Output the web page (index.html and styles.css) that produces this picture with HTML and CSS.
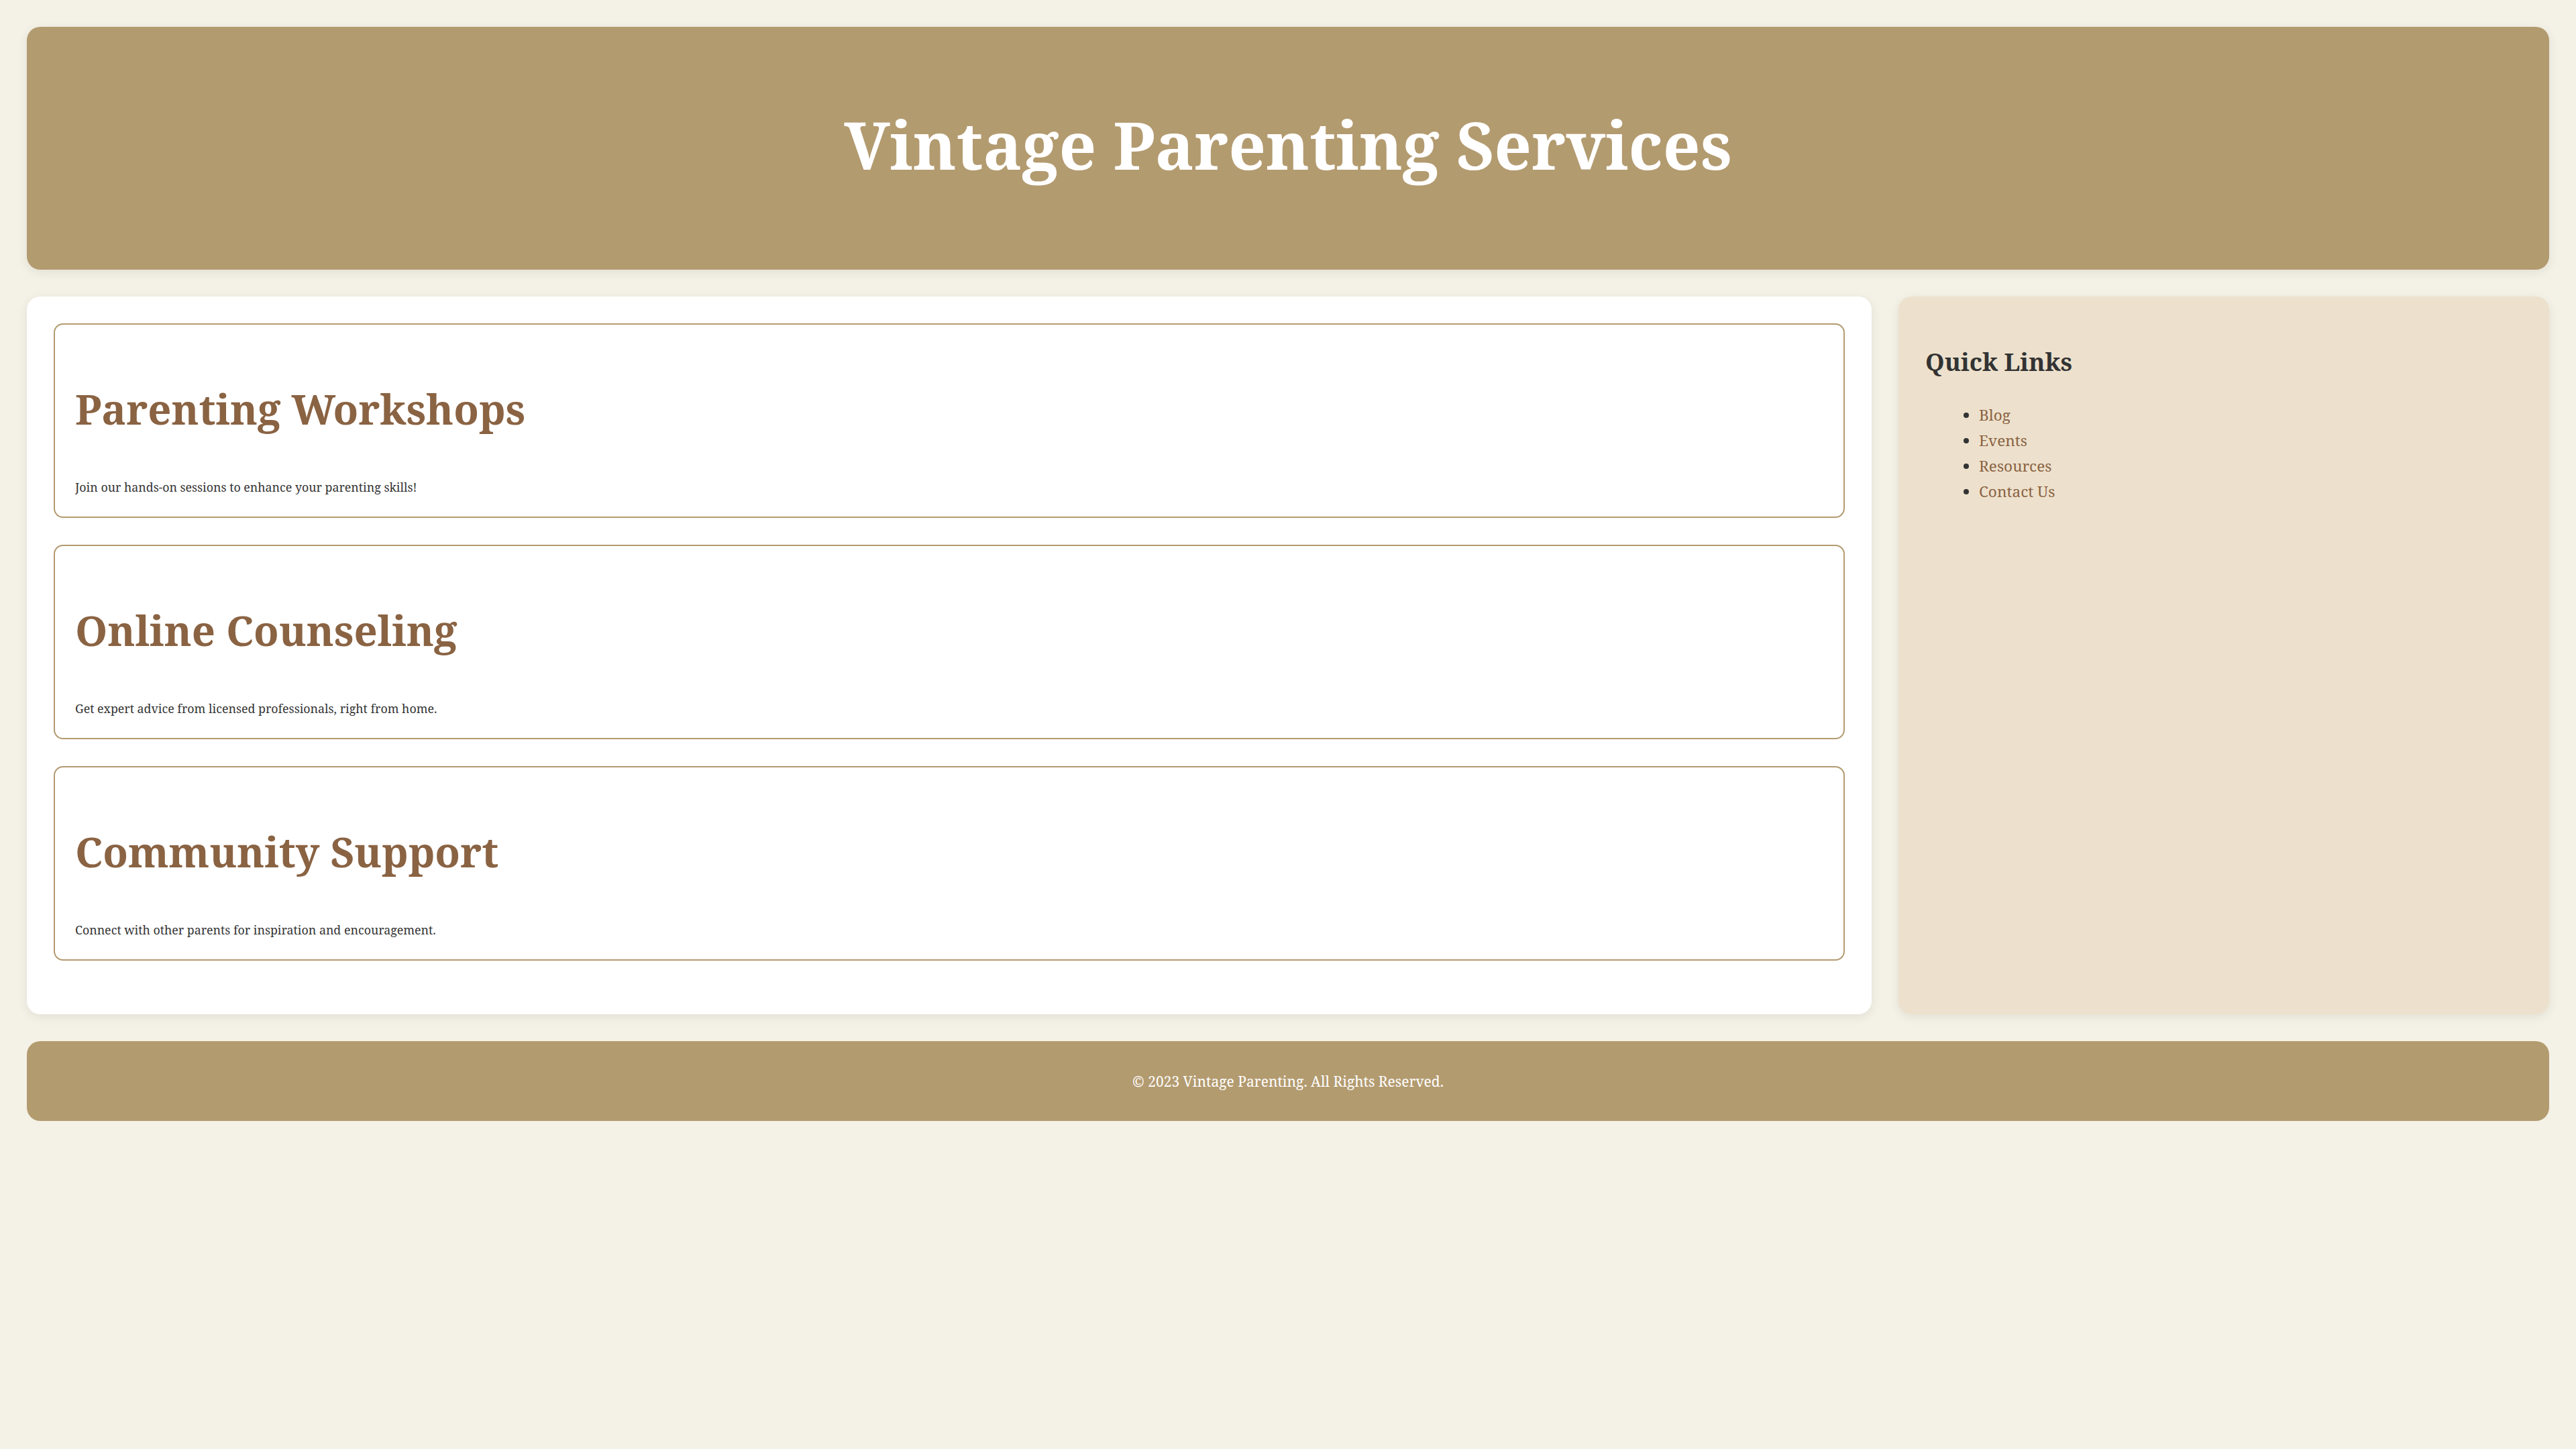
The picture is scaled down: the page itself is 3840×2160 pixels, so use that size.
FILE: index.html
```html
<!DOCTYPE html>
<html lang="en">
<head>
<meta charset="utf-8">
<title>Vintage Parenting Services</title>
<link rel="stylesheet" href="styles.css">
</head>
<body>
  <header class="site-header">
    <h1 class="site-title">Vintage Parenting Services</h1>
  </header>
  <div class="layout">
    <main class="content">
      <section class="service">
        <h2 class="service-title">Parenting Workshops</h2>
        <p class="service-text">Join our hands-on sessions to enhance your parenting skills!</p>
      </section>
      <section class="service">
        <h2 class="service-title">Online Counseling</h2>
        <p class="service-text">Get expert advice from licensed professionals, right from home.</p>
      </section>
      <section class="service">
        <h2 class="service-title">Community Support</h2>
        <p class="service-text">Connect with other parents for inspiration and encouragement.</p>
      </section>
    </main>
    <aside class="sidebar">
      <h3 class="sidebar-title">Quick Links</h3>
      <ul class="links">
        <li class="link-item"><a class="link" href="#">Blog</a></li>
        <li class="link-item"><a class="link" href="#">Events</a></li>
        <li class="link-item"><a class="link" href="#">Resources</a></li>
        <li class="link-item"><a class="link" href="#">Contact Us</a></li>
      </ul>
    </aside>
  </div>
  <footer class="site-footer">
    <p class="footer-text">&copy; 2023 Vintage Parenting. All Rights Reserved.</p>
  </footer>
</body>
</html>
```
FILE: styles.css
```css
* { box-sizing: content-box; }

body {
  margin: 0;
  padding: 40px;
  background: #f4f1e6;
  color: #333333;
  font-family: "Noto Serif", "DejaVu Serif", serif;
}

.site-header {
  background: #b39b70;
  border-radius: 20px;
  padding: 60px 40px;
  text-align: center;
  box-shadow: 0 4px 16px rgba(0, 0, 0, 0.08);
}

.site-title {
  margin: 59px 0 69px;
  font-size: 97.5px;
  line-height: 114px;
  font-weight: 700;
  color: #ffffff;
}

.layout {
  display: flex;
  gap: 40px;
  margin: 40px 0;
}

.content {
  flex: 3 1 0;
  background: #ffffff;
  border-radius: 20px;
  padding: 40px;
  box-shadow: 0 4px 16px rgba(0, 0, 0, 0.08);
}

.service {
  border: 2px solid #b39b70;
  border-radius: 14px;
  padding: 30px;
  margin-bottom: 40px;
}

.service-title {
  margin: 60px 0 68px;
  font-size: 61.5px;
  line-height: 70px;
  font-weight: 700;
  color: #8a6343;
}

.service-text {
  margin: 0;
  font-size: 17.8px;
  line-height: 28px;
  color: #333333;
}

.sidebar {
  flex: 1 1 0;
  background: #ede1cd;
  border-radius: 20px;
  padding: 40px;
  box-shadow: 0 4px 16px rgba(0, 0, 0, 0.08);
}

.sidebar-title {
  margin: 35px 0 0;
  font-size: 36.4px;
  line-height: 44px;
  font-weight: 700;
  color: #333333;
}

.links {
  margin: 44px 0 0;
  padding-left: 80px;
}

.link-item {
  font-size: 22.6px;
  line-height: 28px;
  margin-bottom: 10px;
  color: #333333;
}

.link {
  color: #8a6343;
  text-decoration: none;
}

.site-footer {
  background: #b39b70;
  border-radius: 20px;
  padding: 46px 40px 45px;
  text-align: center;
}

.footer-text {
  margin: 0;
  font-size: 21px;
  line-height: 28px;
  color: #ffffff;
}
```
